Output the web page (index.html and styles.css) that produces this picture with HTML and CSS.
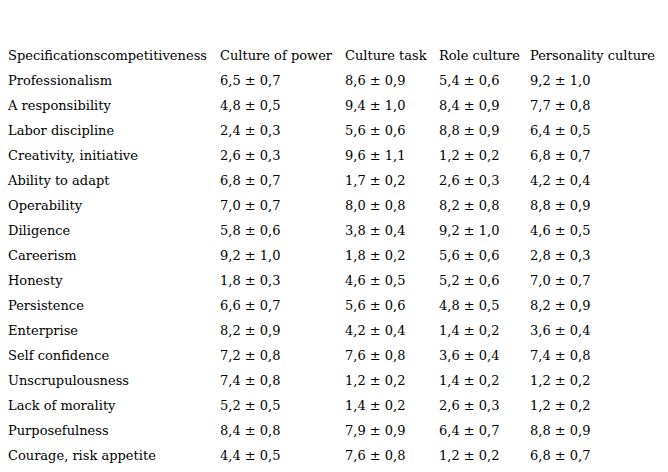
FILE: index.html
```html
<!DOCTYPE html>
<html>
<head>
<meta charset="utf-8">
<link rel="stylesheet" href="styles.css">
</head>
<body>
<table class="data">
<colgroup>
<col class="c-name"><col class="c-power"><col class="c-task"><col class="c-role"><col class="c-person">
</colgroup>
<thead>
<tr><th>Specificationscompetitiveness</th><th>Culture of power</th><th>Culture task</th><th>Role culture</th><th>Personality culture</th></tr>
</thead>
<tbody>
<tr><td>Professionalism</td><td>6,5 ± 0,7</td><td>8,6 ± 0,9</td><td>5,4 ± 0,6</td><td>9,2 ± 1,0</td></tr>
<tr><td>A responsibility</td><td>4,8 ± 0,5</td><td>9,4 ± 1,0</td><td>8,4 ± 0,9</td><td>7,7 ± 0,8</td></tr>
<tr><td>Labor discipline</td><td>2,4 ± 0,3</td><td>5,6 ± 0,6</td><td>8,8 ± 0,9</td><td>6,4 ± 0,5</td></tr>
<tr><td>Creativity, initiative</td><td>2,6 ± 0,3</td><td>9,6 ± 1,1</td><td>1,2 ± 0,2</td><td>6,8 ± 0,7</td></tr>
<tr><td>Ability to adapt</td><td>6,8 ± 0,7</td><td>1,7 ± 0,2</td><td>2,6 ± 0,3</td><td>4,2 ± 0,4</td></tr>
<tr><td>Operability</td><td>7,0 ± 0,7</td><td>8,0 ± 0,8</td><td>8,2 ± 0,8</td><td>8,8 ± 0,9</td></tr>
<tr><td>Diligence</td><td>5,8 ± 0,6</td><td>3,8 ± 0,4</td><td>9,2 ± 1,0</td><td>4,6 ± 0,5</td></tr>
<tr><td>Careerism</td><td>9,2 ± 1,0</td><td>1,8 ± 0,2</td><td>5,6 ± 0,6</td><td>2,8 ± 0,3</td></tr>
<tr><td>Honesty</td><td>1,8 ± 0,3</td><td>4,6 ± 0,5</td><td>5,2 ± 0,6</td><td>7,0 ± 0,7</td></tr>
<tr><td>Persistence</td><td>6,6 ± 0,7</td><td>5,6 ± 0,6</td><td>4,8 ± 0,5</td><td>8,2 ± 0,9</td></tr>
<tr><td>Enterprise</td><td>8,2 ± 0,9</td><td>4,2 ± 0,4</td><td>1,4 ± 0,2</td><td>3,6 ± 0,4</td></tr>
<tr><td>Self confidence</td><td>7,2 ± 0,8</td><td>7,6 ± 0,8</td><td>3,6 ± 0,4</td><td>7,4 ± 0,8</td></tr>
<tr><td>Unscrupulousness</td><td>7,4 ± 0,8</td><td>1,2 ± 0,2</td><td>1,4 ± 0,2</td><td>1,2 ± 0,2</td></tr>
<tr><td>Lack of morality</td><td>5,2 ± 0,5</td><td>1,4 ± 0,2</td><td>2,6 ± 0,3</td><td>1,2 ± 0,2</td></tr>
<tr><td>Purposefulness</td><td>8,4 ± 0,8</td><td>7,9 ± 0,9</td><td>6,4 ± 0,7</td><td>8,8 ± 0,9</td></tr>
<tr><td>Courage, risk appetite</td><td>4,4 ± 0,5</td><td>7,6 ± 0,8</td><td>1,2 ± 0,2</td><td>6,8 ± 0,7</td></tr>
</tbody>
</table>
</body>
</html>
```
FILE: styles.css
```css
html, body {
  background: #ffffff;
}
body {
  margin: 0;
  padding: 43px 0 0 8px;
  font-family: "DejaVu Serif", "Liberation Serif", serif;
  font-size: 13px;
  color: #000000;
}
.data {
  border-collapse: collapse;
  table-layout: fixed;
  width: 660px;
}
.c-name { width: 212px; }
.c-power { width: 125px; }
.c-task { width: 94px; }
.c-role { width: 91px; }
.c-person { width: 138px; }
.data th,
.data td {
  padding: 0;
  height: 25px;
  line-height: 25px;
  text-align: left;
  font-weight: normal;
  white-space: nowrap;
  vertical-align: middle;
}
```
